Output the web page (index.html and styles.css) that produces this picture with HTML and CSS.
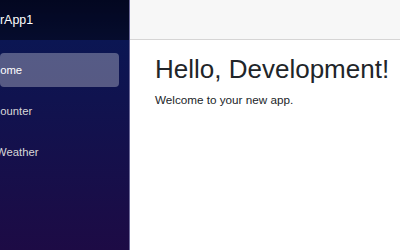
FILE: index.html
```html
<!DOCTYPE html>
<html lang="en">
<head>
  <meta charset="UTF-8" />
  <meta name="viewport" content="width=device-width, initial-scale=1.0"/>
  <title>BlazorApp1</title>
  <link rel="stylesheet" href="styles.css">
</head>
<body>

  <div class="page">
    <div class="sidebar">
      <div class="top-row brand-row">
        <span class="brand">BlazorApp1</span>
      </div>
      <nav class="nav">
        <a class="nav-link active" href="#">Home</a>
        <a class="nav-link counter" href="#">Counter</a>
        <a class="nav-link weather" href="#">Weather</a>
      </nav>
    </div>

    <main>
      <div class="top-row main-top"></div>
      <article class="content">
        <h1>Hello, Development!</h1>
        <p>Welcome to your new app.</p>
      </article>
    </main>
  </div>

</body>
</html>
```

FILE: styles.css
```css
html, body {
  margin: 0;
  height: 100%;
  font-family: "Liberation Sans", Arial, sans-serif;
}

.page {
  display: flex;
  height: 100%;
}

.sidebar {
  width: 129px;
  flex-shrink: 0;
  overflow: hidden;
  background-image: linear-gradient(180deg, #070e3c 0%, #0b1653 16%, #1d0b45 100%);
  border-right: 1px solid #6d6a9a;
}

.top-row {
  height: 40px;
  box-sizing: border-box;
  display: flex;
  align-items: center;
}

.brand-row {
  background-color: rgba(0, 0, 0, 0.45);
}

.brand {
  margin-left: -31px;
  color: #fff;
  font-size: 12.4px;
  white-space: nowrap;
}

.nav {
  display: flex;
  flex-direction: column;
  padding-top: 13px;
}

.nav-link {
  display: flex;
  align-items: center;
  height: 34px;
  margin-bottom: 7px;
  width: 119px;
  margin-left: 0;
  padding-left: 0;
  text-indent: -8px;
  border-radius: 4px;
  color: #d7d7d7;
  font-size: 11.3px;
  text-decoration: none;
  white-space: nowrap;
  overflow: hidden;
}

.nav-link.active {
  background-color: rgba(255, 255, 255, 0.3);
  color: #fff;
}

.nav-link.weather {
  text-indent: -4px;
}

main {
  flex: 1;
  display: flex;
  flex-direction: column;
}

.main-top {
  background-color: #f7f7f7;
  border-bottom: 1px solid #d6d5d5;
}

.content {
  padding: 14px 0 0 25px;
  color: #212529;
}

.content h1 {
  margin: 0 0 8px;
  font-size: 26px;
  font-weight: 500;
  line-height: 1.2;
}

.content p {
  margin: 0;
  font-size: 11.7px;
}
```
